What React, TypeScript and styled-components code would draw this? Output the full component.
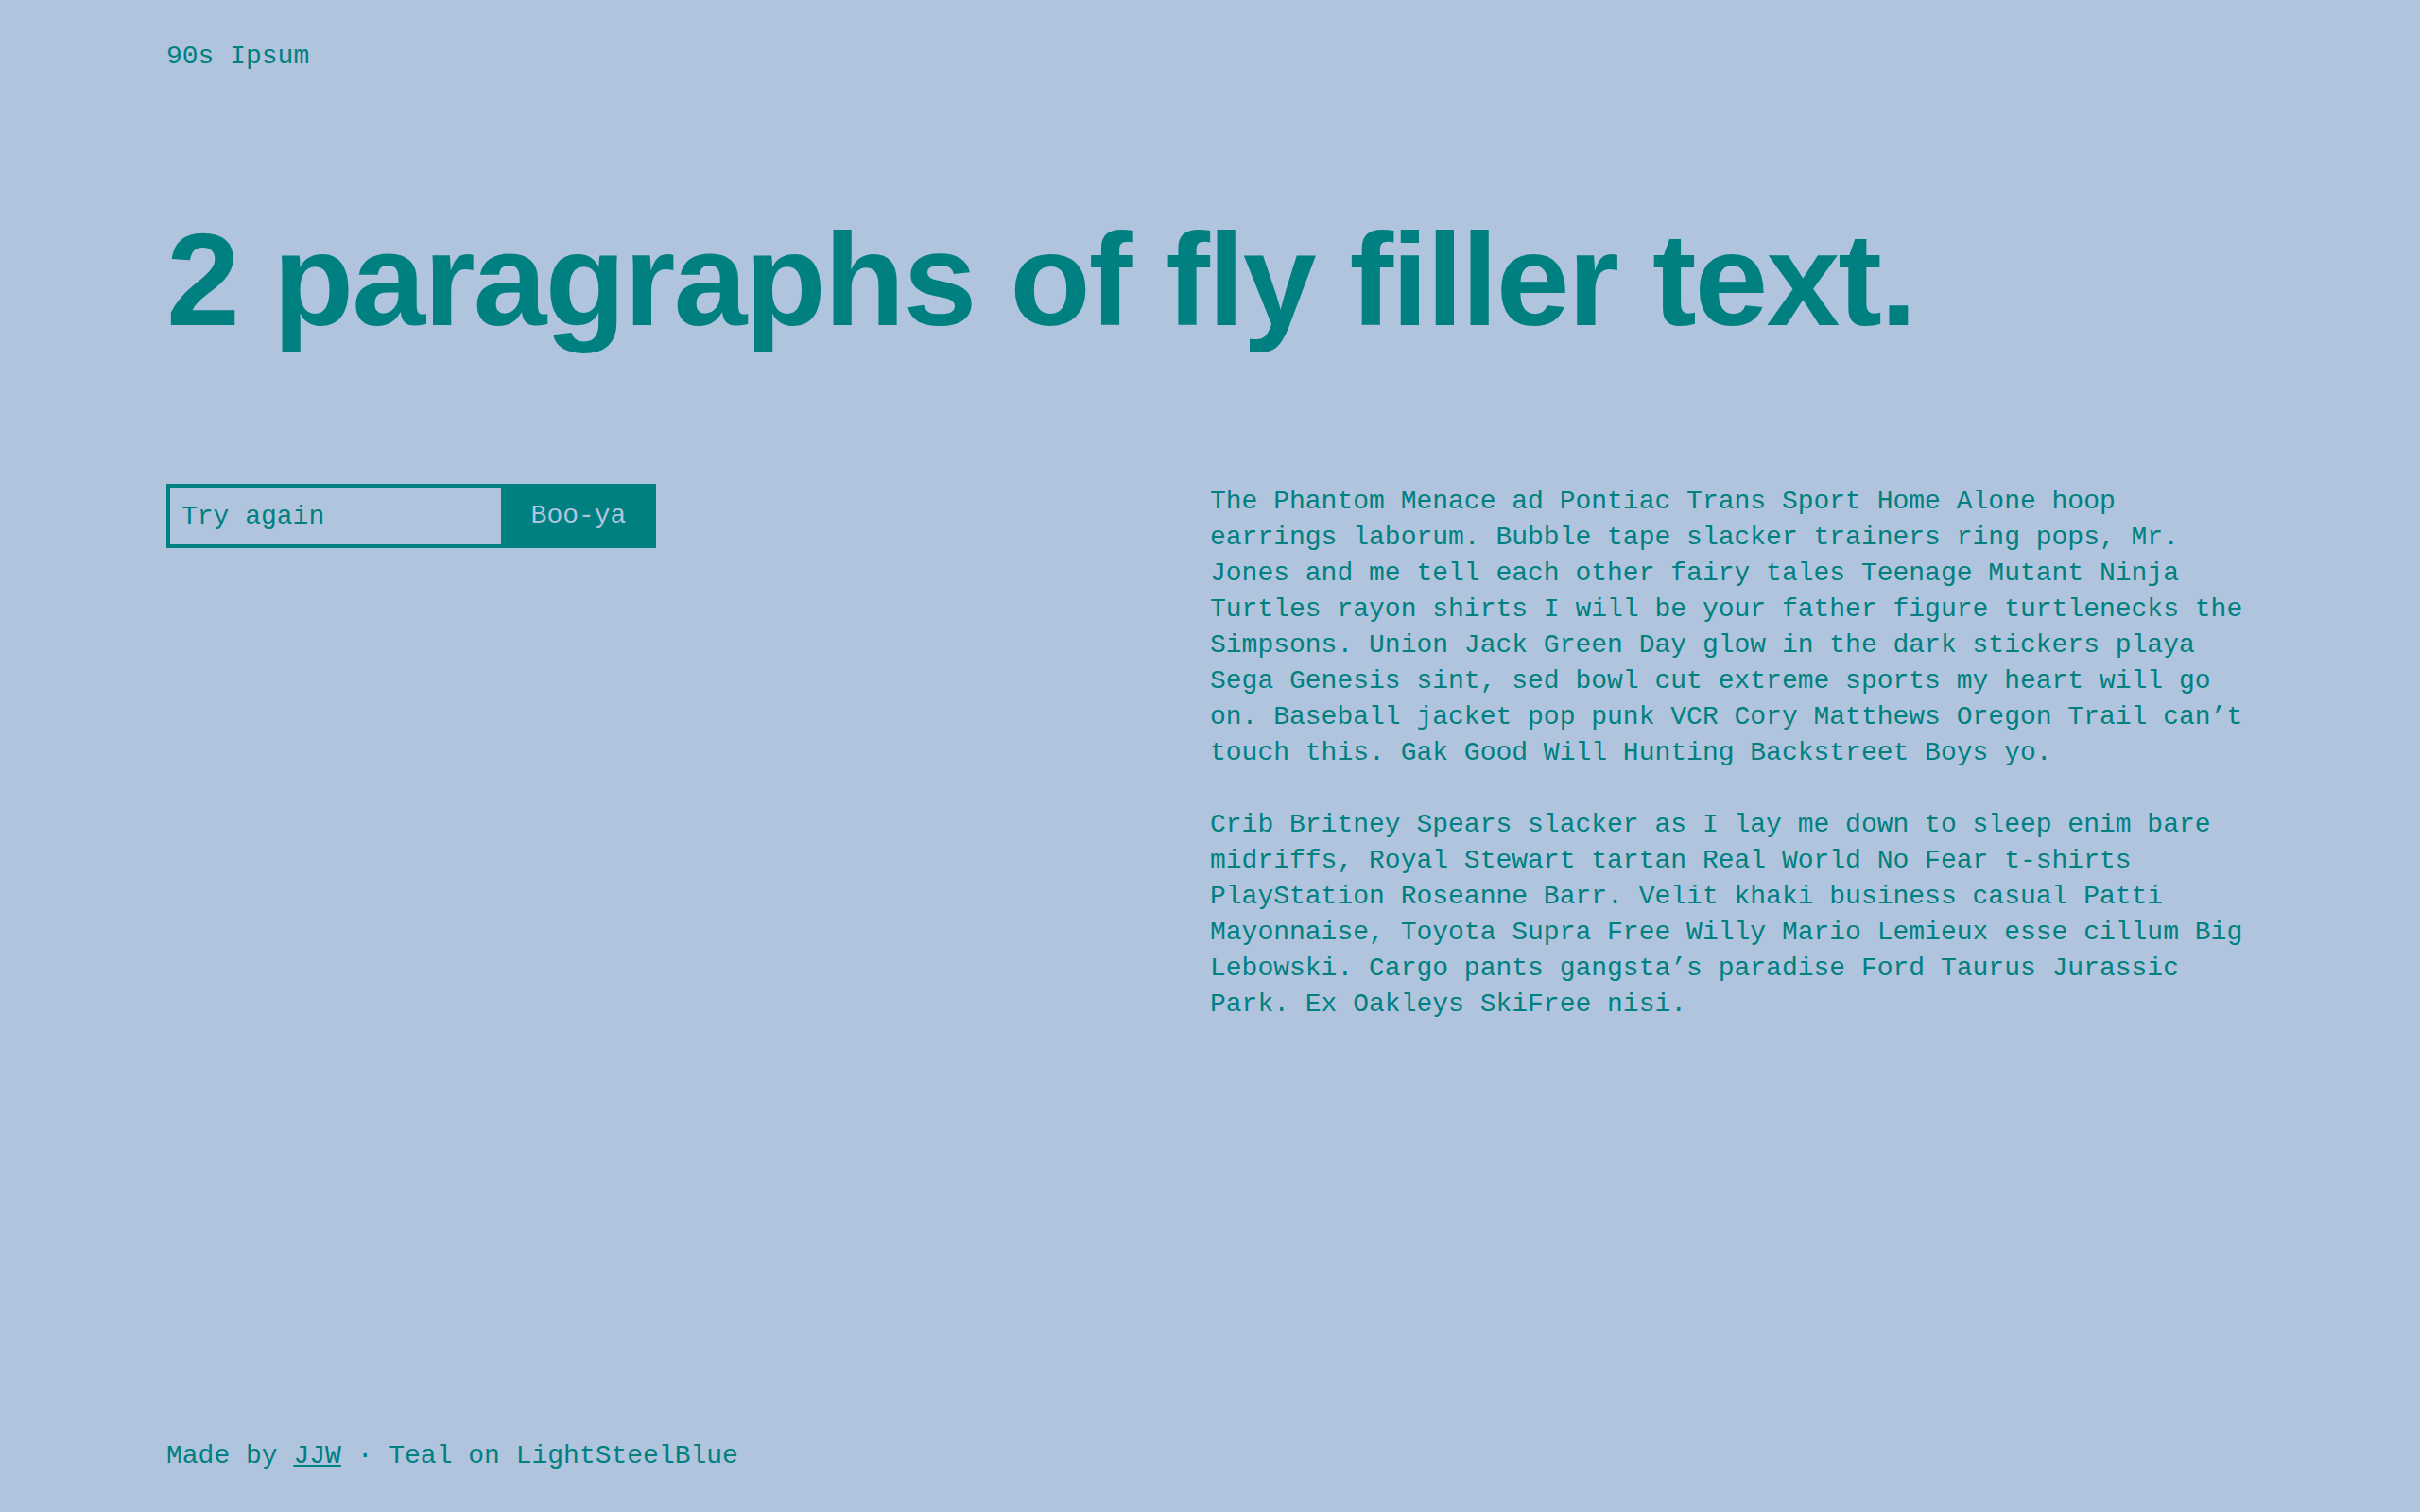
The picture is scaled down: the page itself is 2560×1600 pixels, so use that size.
import React from 'react';
import styled, { createGlobalStyle } from 'styled-components';

const GlobalStyle = createGlobalStyle`
  html,
  body {
    margin: 0;
    padding: 0;
    background-color: #b0c4de;
  }
  * {
    box-sizing: border-box;
  }
`;

const Page = styled.div`
  display: flex;
  flex-direction: column;
  min-height: 100vh;
  padding: 41px 176px 40px;
  color: #008080;
  font-family: 'Liberation Mono', 'DejaVu Sans Mono', monospace;
  font-size: 28px;
  line-height: 38px;
`;

const Brand = styled.header`
  margin: 0;
`;

const Headline = styled.h1`
  margin: 147px 0 146px;
  font-family: 'Liberation Sans', Arial, sans-serif;
  font-size: 140px;
  line-height: 140px;
  font-weight: 700;
  letter-spacing: -2px;
`;

const Columns = styled.main`
  display: grid;
  grid-template-columns: 1fr 1fr;
  align-items: start;
`;

const Form = styled.form`
  display: flex;
  height: 68px;
`;

const Field = styled.input`
  width: 354px;
  height: 100%;
  margin: 0;
  padding: 0 12px;
  border: 4px solid #008080;
  border-right: none;
  border-radius: 0;
  background: transparent;
  color: #008080;
  font: inherit;
  outline: none;

  &::placeholder {
    color: #008080;
    opacity: 1;
  }
`;

const Button = styled.button`
  width: 164px;
  height: 100%;
  margin: 0;
  padding: 0;
  border: none;
  border-radius: 0;
  background-color: #008080;
  color: #b0c4de;
  font: inherit;
  cursor: pointer;
`;

const Copy = styled.div`
  p {
    margin: 0 0 38px;
  }
  p:last-child {
    margin-bottom: 0;
  }
`;

const Footer = styled.footer`
  margin-top: auto;

  a {
    color: inherit;
  }
`;

const paragraphs = [
  'The Phantom Menace ad Pontiac Trans Sport Home Alone hoop earrings laborum. Bubble tape slacker trainers ring pops, Mr. Jones and me tell each other fairy tales Teenage Mutant Ninja Turtles rayon shirts I will be your father figure turtlenecks the Simpsons. Union Jack Green Day glow in the dark stickers playa Sega Genesis sint, sed bowl cut extreme sports my heart will go on. Baseball jacket pop punk VCR Cory Matthews Oregon Trail can\u2019t touch this. Gak Good Will Hunting Backstreet Boys yo.',
  'Crib Britney Spears slacker as I lay me down to sleep enim bare midriffs, Royal Stewart tartan Real World No Fear t-shirts PlayStation Roseanne Barr. Velit khaki business casual Patti Mayonnaise, Toyota Supra Free Willy Mario Lemieux esse cillum Big Lebowski. Cargo pants gangsta\u2019s paradise Ford Taurus Jurassic Park. Ex Oakleys SkiFree nisi.',
];

const App: React.FC = () => {
  return (
    <>
      <GlobalStyle />
      <Page>
        <Brand>90s Ipsum</Brand>
        <Headline>2 paragraphs of fly filler text.</Headline>
        <Columns>
          <Form onSubmit={(e) => e.preventDefault()}>
            <Field type="text" placeholder="Try again" />
            <Button type="submit">Boo-ya</Button>
          </Form>
          <Copy>
            {paragraphs.map((text, i) => (
              <p key={i}>{text}</p>
            ))}
          </Copy>
        </Columns>
        <Footer>
          Made by <a href="#">JJW</a> · Teal on LightSteelBlue
        </Footer>
      </Page>
    </>
  );
};

export default App;
